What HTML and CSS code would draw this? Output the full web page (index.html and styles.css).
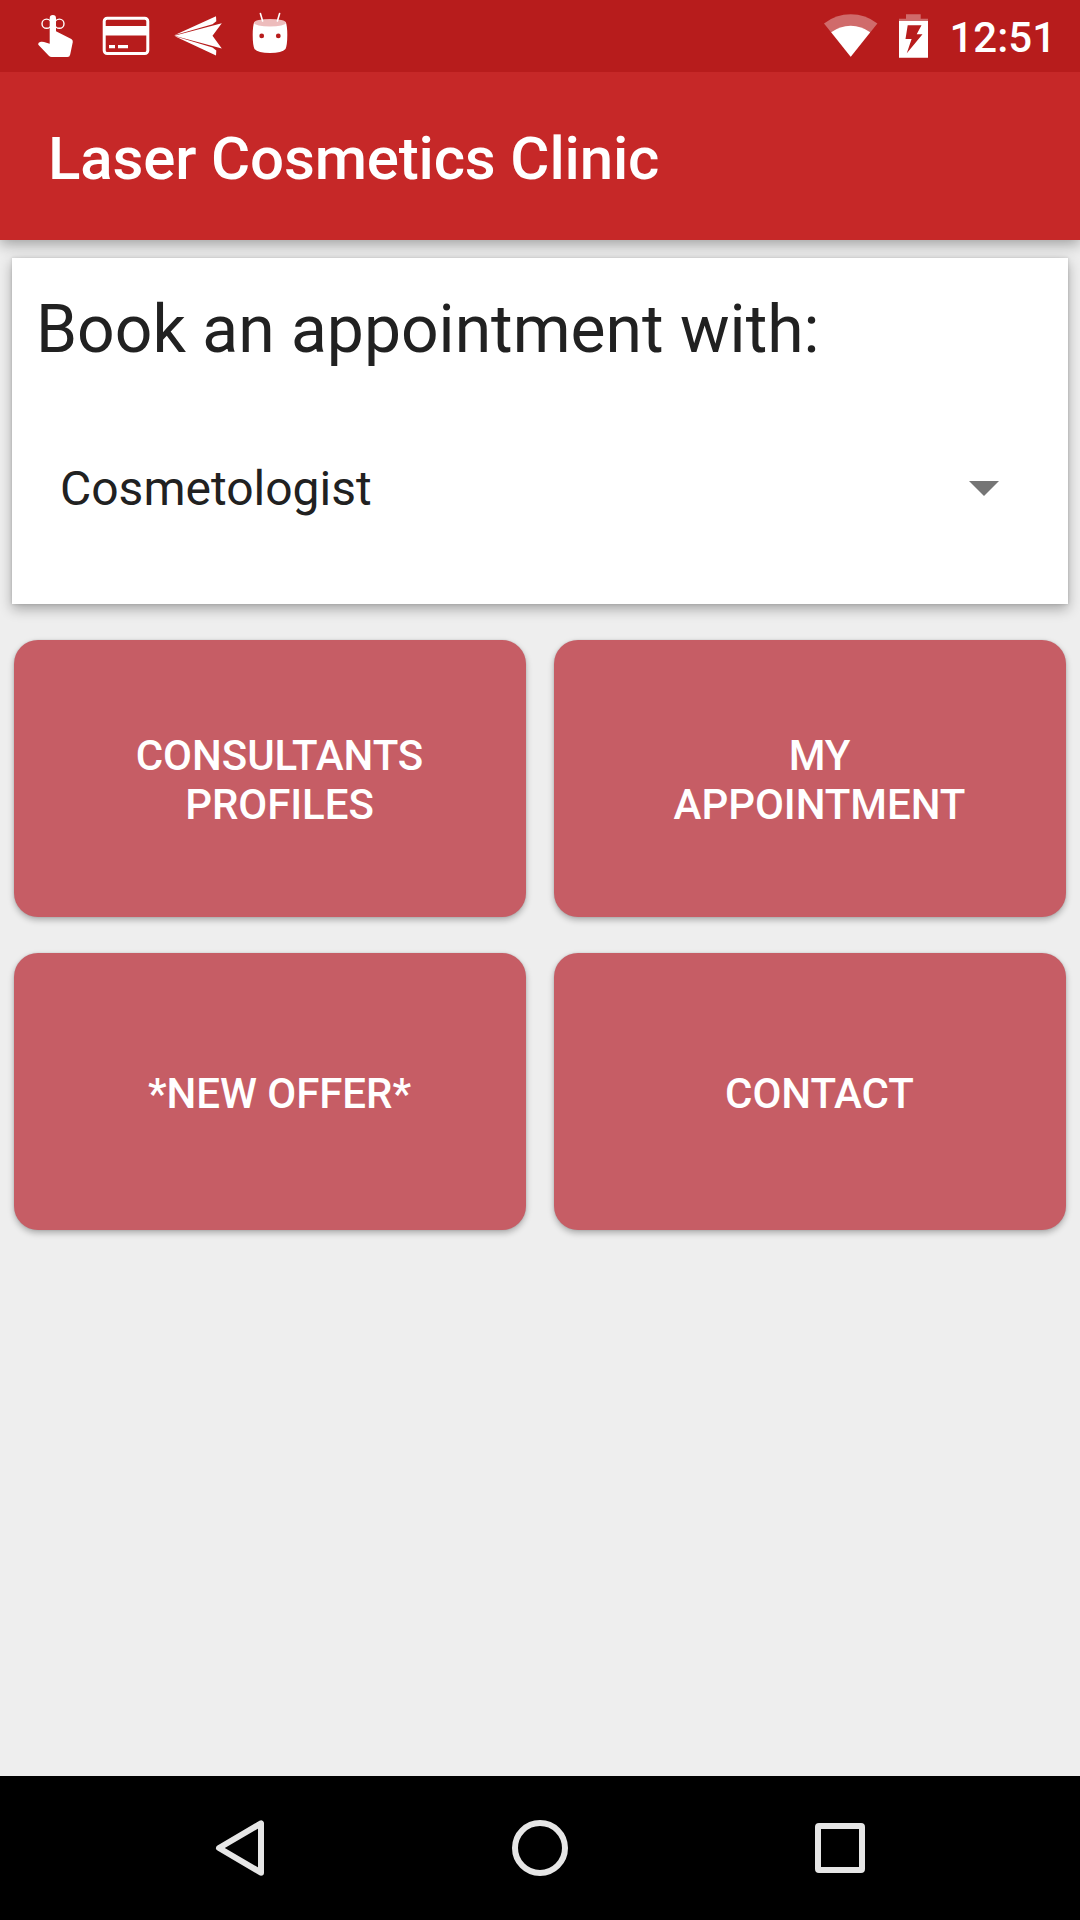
FILE: index.html
```html
<!DOCTYPE html>
<html lang="en">
<head>
<meta charset="utf-8">
<title>Laser Cosmetics Clinic</title>
<link rel="stylesheet" href="styles.css">
</head>
<body>
<div class="screen">
  <div class="status-bar">
    <div class="notifications">
      <svg width="72" height="72" viewBox="0 0 72 72">
        <g fill="none" stroke="#fff" stroke-width="1.4"><circle cx="28.6" cy="23.7" r="4.6"/><circle cx="41.4" cy="23.7" r="4.6"/></g>
        <path fill="#fff" d="M31.7 18.2a3.15 3.15 0 0 1 6.3 0V31.2L53.3 39Q55 40 54.8 42L52.2 54.5Q51.7 57 49.5 57H33.8Q32 57 30.8 55.8L20.3 44.8Q19.8 42.2 23 41.7Q24.5 41.5 26 41.9L31.7 43.8Z"/>
      </svg>
      <svg width="72" height="72" viewBox="0 0 72 72">
        <rect x="14.2" y="18.2" width="43.6" height="35.3" rx="3" fill="none" stroke="#fff" stroke-width="3"/>
        <path fill="#fff" d="M14 26h44v9.5H14zM19 45h6v3.2h-6zM28 45h10v3.2H28z"/>
      </svg>
      <svg width="72" height="72" viewBox="0 0 72 72">
        <path fill="#fff" d="M12.3 35.3L54 16.3L54.3 21.2L50.5 24.2ZM12.3 35.7L59.8 23.3L50.5 35.7L59.8 48.6ZM12.3 36.1L50.5 47.5L54.3 50.5L54 55.5Z"/>
      </svg>
      <svg width="72" height="72" viewBox="0 0 72 72">
        <path fill="#fff" d="M20.2 22Q36 29 51.8 22Q53.3 26 53.3 35Q53.3 45 51.5 49Q48 53 36 53Q24 53 20.5 49Q18.7 45 18.7 35Q18.7 26 20.2 22Z"/>
        <ellipse cx="36" cy="22.7" rx="16" ry="3.8" fill="#edbcbc"/>
        <path stroke="#fff" stroke-width="1.6" stroke-linecap="round" d="M26.4 13.5L28.6 21M45.6 13.5L43.4 21"/>
        <circle cx="27.7" cy="35.9" r="2.4" fill="#b71c1c"/><circle cx="44.3" cy="35.9" r="2.4" fill="#b71c1c"/>
      </svg>
    </div>
    <div class="system">
      <svg width="54" height="72" viewBox="824 0 54 72">
        <path fill="#d06b6b" d="M824 23.4Q836 14.3 850.7 14.3Q865.4 14.3 877.4 23.4L850.7 56.8Z"/>
        <path fill="#fff" d="M831.2 32.2Q840 25.7 850.7 25.7Q861.4 25.7 870.2 32.2L850.7 56.8Z"/>
      </svg>
      <svg width="29" height="72" viewBox="899 0 29 72">
        <path fill="#d06b6b" d="M906 14.3H920.7V18.8H928V21H899V18.8H906Z"/>
        <path fill="#fff" d="M899 21H928V57.7H899Z"/>
        <path fill="#b71c1c" d="M907.7 25.2H921.5L916.7 34.2H922.5L906.8 53.2L911.6 39H905.5Z"/>
      </svg>
      <span class="clock">12:51</span>
    </div>
  </div>

  <header class="app-bar"><h1>Laser Cosmetics Clinic</h1></header>

  <main class="content">
    <section class="card">
      <h2>Book an appointment with:</h2>
      <div class="spinner">
        <span>Cosmetologist</span>
        <svg width="30" height="15" viewBox="0 0 30 15"><path fill="#757575" d="M0 0H30L15 15Z"/></svg>
      </div>
    </section>
    <div class="actions">
      <button class="action">CONSULTANTS<br>PROFILES</button>
      <button class="action">MY<br>APPOINTMENT</button>
      <button class="action">*NEW OFFER*</button>
      <button class="action">CONTACT</button>
    </div>
  </main>

  <nav class="nav-bar">
    <svg width="60" height="60" viewBox="0 0 60 60"><path d="M9 30L51 5.3V54.7Z"/></svg>
    <svg width="60" height="60" viewBox="0 0 60 60"><circle cx="30" cy="30" r="25"/></svg>
    <svg width="60" height="60" viewBox="0 0 60 60"><rect x="8" y="8" width="44" height="44" rx="1"/></svg>
  </nav>
</div>
</body>
</html>
```

FILE: styles.css
```css
* {
  box-sizing: border-box;
}

body {
  margin: 0;
  font-family: Roboto, sans-serif;
}

h1,
h2 {
  margin: 0;
}

svg {
  display: block;
  flex: none;
}

.screen {
  display: flex;
  flex-direction: column;
  width: 1080px;
  height: 1920px;
  overflow: hidden;
  background: #eee;
}

.status-bar {
  position: relative;
  z-index: 1;
  display: flex;
  justify-content: space-between;
  height: 72px;
  padding: 0 24px 0 18px;
  background: #b71c1c;
}

.notifications {
  display: flex;
}

.system {
  display: flex;
  gap: 21px;
}

.clock {
  color: #fff;
  font-size: 42px;
  font-weight: 500;
  line-height: 76px;
}

.app-bar {
  display: flex;
  align-items: center;
  height: 168px;
  padding: 5px 48px 0;
  background: #c62828;
  box-shadow: 0 4px 14px rgba(0, 0, 0, 0.34);
}

.app-bar h1 {
  color: #fff;
  font-size: 60px;
  font-weight: 500;
  line-height: 70px;
  letter-spacing: -0.15px;
}

.content {
  flex: 1;
  padding: 18px 12px 0;
}

.card {
  height: 346px;
  padding: 33px 24px 0;
  color: #212121;
  background: #fff;
  box-shadow: 0 5px 12px rgba(0, 0, 0, 0.3), 0 0 3px rgba(0, 0, 0, 0.15);
}

.card h2 {
  font-size: 66px;
  font-weight: 400;
  line-height: 78px;
}

.spinner {
  display: flex;
  align-items: center;
  justify-content: space-between;
  height: 72px;
  margin-top: 83px;
  padding: 0 45px 0 24px;
  font-size: 48px;
}

.actions {
  display: grid;
  grid-template-columns: 512px 512px;
  grid-auto-rows: 277px;
  gap: 36px 28px;
  margin: 36px 2px 0;
}

.action {
  padding: 3px 0 0 19px;
  border: 0;
  border-radius: 24px;
  color: #fff;
  background: #c65d65;
  box-shadow: 0 3px 6px rgba(0, 0, 0, 0.28), 0 0 2px rgba(0, 0, 0, 0.12);
  font: 500 42px/49px Roboto, sans-serif;
  letter-spacing: -0.05px;
}

.nav-bar {
  display: flex;
  align-items: center;
  justify-content: center;
  gap: 240px;
  height: 144px;
  background: #000;
}

.nav-bar svg {
  fill: none;
  stroke: #e6e6e6;
  stroke-width: 6;
  stroke-linejoin: round;
}
```
